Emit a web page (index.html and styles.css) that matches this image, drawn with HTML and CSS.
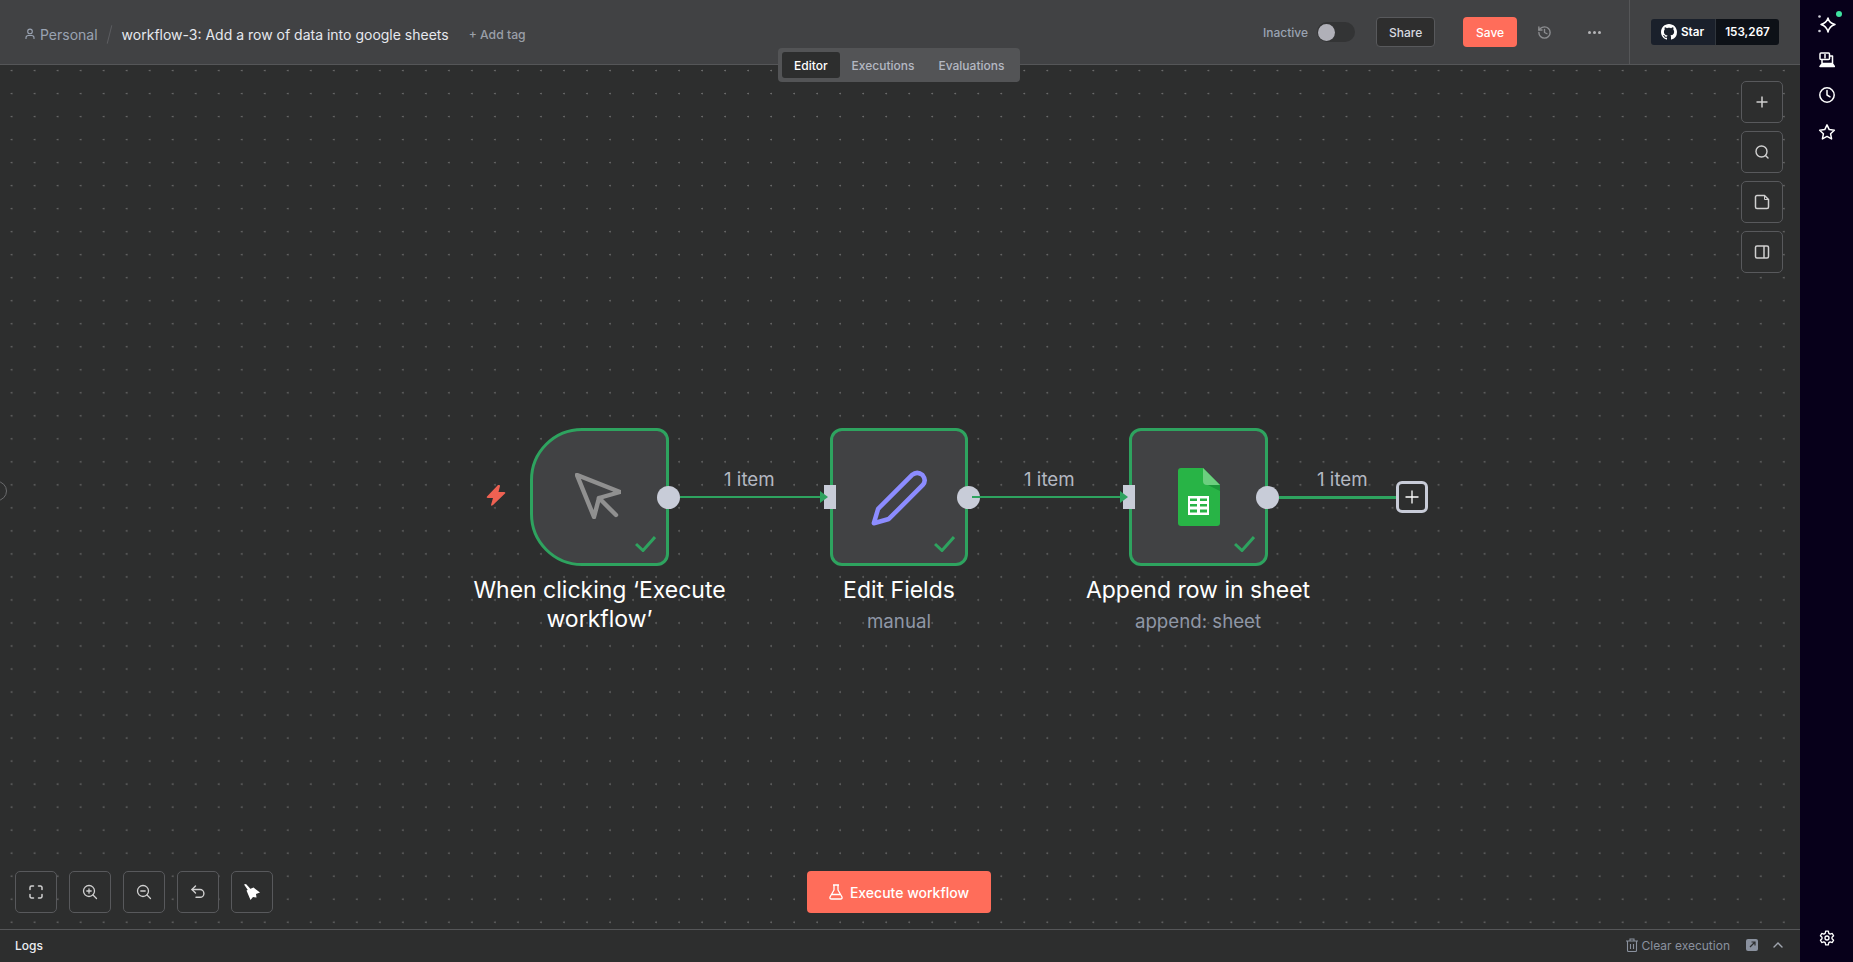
FILE: index.html
```html
<!DOCTYPE html>
<html lang="en">

<head>
    <meta charset="UTF-8" />
    <meta name="viewport" content="width=device-width, initial-scale=1.0" />
    <title>workflow-3: Add a row of data into google sheets</title>
    <link rel="stylesheet" href="styles.css">
</head>

<body>
    <div class="app">
        <div class="main">
            <header class="topbar">
                <div class="crumbs">
                    <svg class="person" width="12" height="12" viewBox="0 0 12 12" fill="none" stroke="currentColor" stroke-width="1.1">
                        <circle cx="6" cy="3.4" r="2.3" />
                        <path d="M2 11v-1.2A2.3 2.3 0 0 1 4.3 7.5h3.4A2.3 2.3 0 0 1 10 9.8V11" />
                    </svg>
                    <span class="project">Personal</span>
                    <span class="slash"></span>
                    <span class="wf-name">workflow-3: Add a row of data into google sheets</span>
                    <span class="add-tag">+ Add tag</span>
                </div>

                <div class="actions">
                    <span class="state">Inactive</span>
                    <span class="switch"><span class="knob"></span></span>
                    <button class="btn-share">Share</button>
                    <button class="btn-save">Save</button>
                    <svg class="history" width="15" height="15" viewBox="0 0 24 24" fill="none" stroke="currentColor" stroke-width="2.2" stroke-linecap="round" stroke-linejoin="round">
                        <path d="M3 12a9 9 0 1 0 9-9 9.75 9.75 0 0 0-6.74 2.74L3 8" />
                        <path d="M3 3v5h5" />
                        <path d="M12 7v5l4 2" />
                    </svg>
                    <span class="more"><i></i><i></i><i></i></span>
                </div>

                <div class="gh-box">
                    <div class="gh-star">
                        <svg width="16" height="16" viewBox="0 0 16 16" fill="#fff">
                            <path d="M8 0C3.58 0 0 3.58 0 8c0 3.54 2.29 6.53 5.47 7.59.4.07.55-.17.55-.38 0-.19-.01-.82-.01-1.49-2.01.37-2.53-.49-2.69-.94-.09-.23-.48-.94-.82-1.13-.28-.15-.68-.52-.01-.53.63-.01 1.08.58 1.23.82.72 1.21 1.87.87 2.33.66.07-.52.28-.87.51-1.07-1.78-.2-3.64-.89-3.64-3.95 0-.87.31-1.59.82-2.15-.08-.2-.36-1.02.08-2.12 0 0 .67-.21 2.2.82.64-.18 1.32-.27 2-.27s1.36.09 2 .27c1.53-1.04 2.2-.82 2.2-.82.44 1.1.16 1.92.08 2.12.51.56.82 1.27.82 2.15 0 3.07-1.87 3.75-3.65 3.95.29.25.54.73.54 1.48 0 1.07-.01 1.93-.01 2.2 0 .21.15.46.55.38A8.01 8.01 0 0 0 16 8c0-4.42-3.58-8-8-8z" />
                        </svg>
                        <span>Star</span>
                    </div>
                    <div class="gh-count">153,267</div>
                </div>

                <nav class="tabs">
                    <span class="tab active">Editor</span>
                    <span class="tab">Executions</span>
                    <span class="tab">Evaluations</span>
                </nav>
            </header>

            <section class="canvas">
                <!-- node cut off by the left edge of the canvas -->
                <i class="stub"></i>

                <!-- trigger bolt -->
                <svg class="bolt" width="20" height="21" viewBox="0 0 20 21" fill="#ee6152">
                    <path d="M12 0 L1 11.5 Q0 13 2 13 L7 13 L5 20 Q5 21.5 7 20 L19 8.5 Q20 7 18 7 L12.5 7 L14 1 Q14 -.5 12 0z" />
                </svg>

                <!-- edges -->
                <div class="edge" style="left: 680px; width: 146px"><span class="edge-label">1 item</span><i class="arrow"></i></div>
                <div class="edge" style="left: 972px; width: 154px"><span class="edge-label label-b">1 item</span><i class="arrow"></i></div>
                <div class="edge edge-end" style="left: 1279px; width: 117px"><span class="edge-label label-c">1 item</span></div>

                <!-- nodes -->
                <div class="node trigger wide" style="left: 530px">
                    <svg class="node-icon cursor-icon" width="46" height="46" viewBox="0 0 46 46" fill="none" stroke="#909090" stroke-width="4.4" stroke-linecap="round" stroke-linejoin="round">
                        <path d="M2 2 L45 19 L24 25 L19 44 Z" />
                        <path d="M24 25 L41 42" />
                    </svg>
                    <svg class="check" width="21" height="16" viewBox="0 0 21 16" fill="none" stroke="#2ea35f" stroke-width="3"><path d="M1 8 L8 14.5 L20 1" /></svg>
                    <i class="out"></i>
                </div>

                <div class="node" style="left: 830px">
                    <svg class="node-icon" width="60" height="60" viewBox="11 8 56 56" fill="none" stroke="#8c8cff" stroke-width="4.2" stroke-linejoin="round">
                        <path d="M15.5 60.5 L19.5 47 L51 15.5 Q56 11.5 61 15.5 Q65 20.5 61 25 L29.5 56.5 Z" />
                    </svg>
                    <svg class="check" width="21" height="16" viewBox="0 0 21 16" fill="none" stroke="#2ea35f" stroke-width="3"><path d="M1 8 L8 14.5 L20 1" /></svg>
                    <i class="in"></i>
                    <i class="out out-mid"></i>
                </div>

                <div class="node wide" style="left: 1129px">
                    <svg class="node-icon" width="42" height="58" viewBox="8 8 42 58">
                        <path d="M11 8 H33 L50 25 V63 a3 3 0 0 1-3 3 H11 a3 3 0 0 1-3-3 V11 a3 3 0 0 1 3-3z" fill="#28b446" />
                        <path d="M36 24 L50 31 V25 Z" fill="#1b973a" />
                        <path d="M33 8 L50 25 H37 a4 4 0 0 1-4-4z" fill="#6ccf7f" />
                        <path d="M18 36 H39 V55 H18z" fill="#fff" />
                        <path d="M20 38.500 H27 V41 H20z M30 38.500 H37 V41 H30z M20 44 H27 V46.500 H20z M30 44 H37 V46.500 H30z M20 49.500 H27 V52.500 H20z M30 49.500 H37 V52.500 H30z" fill="#28b446" />
                    </svg>
                    <svg class="check" width="21" height="16" viewBox="0 0 21 16" fill="none" stroke="#2ea35f" stroke-width="3"><path d="M1 8 L8 14.5 L20 1" /></svg>
                    <i class="in"></i>
                    <i class="out"></i>
                </div>

                <button class="add-node">
                    <svg width="16" height="16" viewBox="0 0 16 16" stroke="#fff" stroke-width="1.3"><path d="M8 1.500 V14.500 M1.500 8 H14.500" /></svg>
                </button>

                <!-- labels -->
                <div class="node-text" style="left: 449.5px">
                    <div class="node-title">When clicking ‘Execute workflow’</div>
                </div>
                <div class="node-text" style="left: 749px">
                    <div class="node-title">Edit Fields</div>
                    <div class="node-sub">manual</div>
                </div>
                <div class="node-text" style="left: 1048px">
                    <div class="node-title">Append row in sheet</div>
                    <div class="node-sub">append: sheet</div>
                </div>

                <div class="side-tools">
                    <button class="tool">
                        <svg width="16" height="16" viewBox="0 0 16 16" stroke="#d0d0d0" stroke-width="1.5"><path d="M8 2.500 V13.500 M2.500 8 H13.500" /></svg>
                    </button>
                    <button class="tool">
                        <svg width="16" height="16" viewBox="0 0 16 16" fill="none" stroke="#d0d0d0" stroke-width="1.4" stroke-linecap="round"><circle cx="7.500" cy="7.500" r="5.500" /><path d="M11.500 11.500 L14 14" /></svg>
                    </button>
                    <button class="tool">
                        <svg width="16" height="16" viewBox="0 0 16 16" fill="none" stroke="#d0d0d0" stroke-width="1.5" stroke-linejoin="round"><path d="M3 1.500 H10.500 L14.500 5.500 V13 a1.500 1.500 0 0 1-1.500 1.500 H3 a1.500 1.500 0 0 1-1.500-1.500 V3 a1.500 1.500 0 0 1 1.500-1.500z" /><path d="M10.500 2 V5.500 H14" stroke-width="1" /></svg>
                    </button>
                    <button class="tool">
                        <svg width="16" height="16" viewBox="0 0 16 16" fill="none" stroke="#d0d0d0" stroke-width="1.5"><rect x="1.500" y="2" width="13" height="12" rx="1.500" /><path d="M10 2 V14" /></svg>
                    </button>
                </div>

                <div class="bottom-tools">
                    <button class="tool">
                        <svg width="16" height="16" viewBox="0 0 16 16" fill="none" stroke="#d0d0d0" stroke-width="1.500" stroke-linecap="round"><path d="M2 5.500 V3.500 A1.500 1.500 0 0 1 3.500 2 H5.500 M10.500 2 H12.500 A1.500 1.500 0 0 1 14 3.500 V5.500 M14 10.500 V12.500 A1.500 1.500 0 0 1 12.500 14 H10.500 M5.500 14 H3.500 A1.500 1.500 0 0 1 2 12.500 V10.500" /></svg>
                    </button>
                    <button class="tool">
                        <svg width="16" height="16" viewBox="0 0 16 16" fill="none" stroke="#d0d0d0" stroke-width="1.300" stroke-linecap="round"><circle cx="7" cy="7" r="5.500" /><path d="M11 11 L14.500 14.500 M7 4.800 V9.200 M4.800 7 H9.200" /></svg>
                    </button>
                    <button class="tool">
                        <svg width="16" height="16" viewBox="0 0 16 16" fill="none" stroke="#d0d0d0" stroke-width="1.300" stroke-linecap="round"><circle cx="7" cy="7" r="5.500" /><path d="M11 11 L14.500 14.500 M4.800 7 H9.200" /></svg>
                    </button>
                    <button class="tool">
                        <svg width="16" height="16" viewBox="0 0 16 16" fill="none" stroke="#d0d0d0" stroke-width="1.400" stroke-linecap="round" stroke-linejoin="round"><path d="M5.500 2 L2 5.500 L5.500 9" /><path d="M2 5.500 H10 a3.800 3.800 0 0 1 0 7.800 H6" /></svg>
                    </button>
                    <button class="tool">
                        <svg width="16" height="16" viewBox="0 0 16 16" fill="#fff"><path d="M0 .5 L2 0 L7 5.500 L4.500 7z" /><path d="M2.500 6.500 L9.500 3.500 L16 8.500 L12 10 L12.500 13.500 L9 13 L6.500 16z" /></svg>
                    </button>
                </div>

                <button class="btn-run">
                    <svg width="14" height="16" viewBox="0 0 14 16" fill="none" stroke="#fff" stroke-width="1.300" stroke-linejoin="round"><path d="M4 1 H10 M5 1 V6 L1 13 Q.5 15 2.500 15 H11.500 Q13.500 15 13 13 L9 6 V1 M3 10.500 H11" /></svg>
                    <span>Execute workflow</span>
                </button>
            </section>

            <footer class="logs">
                <span class="logs-title">Logs</span>
                <div class="logs-right">
                    <svg width="12" height="14" viewBox="0 0 12 14" fill="none" stroke="#8a919e" stroke-width="1.100"><path d="M0 3 H12 M4 3 V1 H8 V3 M1.500 3 V12.500 a1 1 0 0 0 1 1 H9.500 a1 1 0 0 0 1-1 V3 M4.500 6 V11 M7.500 6 V11" /></svg>
                    <span class="clear">Clear execution</span>
                    <svg class="popout" width="12" height="12" viewBox="0 0 12 12"><rect width="12" height="12" rx="2" fill="#8a919e" /><path d="M4 8 L9 3 M5.500 3 H9 V6.500" fill="none" stroke="#2d2e2e" stroke-width="1.200" /></svg>
                    <svg class="chev" width="10" height="6" viewBox="0 0 10 6" fill="none" stroke="#a0a5ae" stroke-width="1.400" stroke-linecap="round"><path d="M1 5 L5 1 L9 5" /></svg>
                </div>
            </footer>
        </div>

        <aside class="sidebar">
            <div class="side-top">
                <span class="ai-icon">
                    <svg width="20" height="20" viewBox="0 0 20 20" fill="none" stroke="#fff" stroke-width="1.500" stroke-linejoin="round"><path d="M11 4 Q12 9 18 10.500 Q12.500 12 11 18 Q9.500 12 4 10.500 Q9.500 9 11 4z" /><circle cx="2.500" cy="2.500" r="1.300" fill="#cfcfd8" stroke="none" /><circle cx="2.500" cy="17" r="1.300" fill="#cfcfd8" stroke="none" /></svg>
                    <i class="ai-dot"></i>
                </span>
                <svg width="16" height="16" viewBox="0 0 16 16" fill="none" stroke="#fff" stroke-width="1.500" stroke-linejoin="round"><rect x="1" y="1" width="9.500" height="6.500" rx="1" /><path d="M6 2 V6.500 M10.500 4 H13.500 V12 M3 7.500 V11.500 H13.500" /><path d="M1 14.500 H15.500 L14 12.500 H2.500z" fill="#fff" /></svg>
                <svg width="18" height="18" viewBox="0 0 18 18" fill="none" stroke="#fff" stroke-width="1.500" stroke-linecap="round" stroke-linejoin="round"><circle cx="9" cy="9" r="7.200" /><path d="M9 4.500 V9 L12 10.800" /></svg>
                <svg width="18" height="18" viewBox="0 0 24 24" fill="none" stroke="#fff" stroke-width="2" stroke-linejoin="round"><path d="M12 2.500 L15 8.800 L21.800 9.700 L16.800 14.400 L18.100 21.200 L12 17.900 L5.900 21.200 L7.200 14.400 L2.200 9.700 L9 8.800 Z" /></svg>
            </div>
            <svg class="gear" width="16" height="16" viewBox="0 0 24 24" fill="none" stroke="#fff" stroke-width="2" stroke-linejoin="round"><path d="M10 1.800 H14 L14.700 5 L16.800 6.200 L19.900 5.200 L21.900 8.700 L19.500 10.800 V13.200 L21.900 15.300 L19.900 18.800 L16.800 17.800 L14.700 19 L14 22.200 H10 L9.300 19 L7.200 17.800 L4.100 18.800 L2.100 15.300 L4.500 13.200 V10.800 L2.100 8.700 L4.100 5.200 L7.200 6.200 L9.300 5 Z" /><circle cx="12" cy="12" r="3" /></svg>
        </aside>
    </div>
</body>

</html>
```

FILE: styles.css
```css
* {
    box-sizing: border-box;
}

body {
    margin: 0;
    font-family: Inter, "Noto Sans", sans-serif;
    background-color: #2d2e2e;
    color: #fff;
    overflow: hidden;
}

button {
    font-family: inherit;
    cursor: pointer;
}

.app {
    display: flex;
    height: 100vh;
}

.main {
    flex: 1;
    display: flex;
    flex-direction: column;
    min-width: 0;
}

/* top bar */
.topbar {
    position: relative;
    height: 65px;
    flex-shrink: 0;
    display: flex;
    align-items: center;
    background-color: #414244;
    border-bottom: 1px solid #555658;
    z-index: 5;
}

.crumbs {
    display: flex;
    align-items: center;
    padding-left: 24px;
    padding-top: 4px;
    flex: 1;
}

.person {
    color: #9aa3b2;
    margin-right: 4px;
}

.project {
    font-size: 14px;
    color: #9aa3b2;
}

.slash {
    width: 1px;
    height: 19px;
    margin: 0 11.5px;
    background-color: #5c5d60;
    transform: rotate(14deg);
}

.wf-name {
    font-size: 14px;
    color: #e6e8ee;
}

.add-tag {
    font-size: 12.2px;
    font-weight: 500;
    color: #9a9fa8;
    margin-left: 20px;
}

.actions {
    display: flex;
    align-items: center;
    height: 100%;
    width: 366px;
}

.state {
    font-size: 12px;
    font-weight: 500;
    color: #9aa3b2;
    margin-right: 9px;
}

.switch {
    display: flex;
    align-items: center;
    width: 38px;
    height: 20px;
    padding-left: 1px;
    border-radius: 10px;
    background-color: #333435;
    margin-right: 21px;
}

.knob {
    width: 17px;
    height: 17px;
    border-radius: 50%;
    background-color: #b0b0b8;
}

.btn-share {
    width: 59px;
    height: 30px;
    border: 1px solid #58595c;
    border-radius: 4px;
    background-color: #2e2e2e;
    color: #d8dae0;
    font-size: 12px;
    font-weight: 500;
    margin-right: 28px;
}

.btn-save {
    width: 54px;
    height: 30px;
    border: none;
    border-radius: 4px;
    background-color: #ff6d5a;
    color: #fff;
    font-size: 12px;
    font-weight: 500;
    margin-right: 20px;
}

.history {
    color: #8c8d90;
    margin-right: 36px;
}

.more {
    display: flex;
    gap: 2px;
}

.more i {
    width: 3px;
    height: 3px;
    border-radius: 50%;
    background-color: #b4b5b8;
}

.gh-box {
    width: 171px;
    height: 100%;
    flex-shrink: 0;
    display: flex;
    align-items: center;
    padding-left: 21px;
    border-left: 1px solid #555658;
    font-size: 11.7px;
    font-weight: 600;
}

.gh-star {
    display: flex;
    align-items: center;
    gap: 4px;
    width: 64px;
    height: 26px;
    padding-left: 10px;
    background-color: #1a202b;
    border-radius: 3px 0 0 3px;
}

.gh-count {
    width: 64px;
    height: 26px;
    line-height: 26px;
    text-align: center;
    background-color: #0d1117;
    border-left: 1px solid #30363d;
    border-radius: 0 3px 3px 0;
}

.tabs {
    position: absolute;
    left: 778px;
    top: 48px;
    width: 242px;
    height: 34px;
    display: flex;
    align-items: center;
    padding: 0 4px;
    gap: 0;
    background-color: #535456;
    border-radius: 4px;
}

.tab {
    height: 26px;
    line-height: 28px;
    padding: 0 12px;
    font-size: 12px;
    font-weight: 500;
    color: #b4b8c2;
}

.tab.active {
    background-color: #2d2e2e;
    color: #fff;
    border-radius: 3px;
}

/* canvas */
.canvas {
    position: relative;
    flex: 1;
    overflow: hidden;
    background-image: radial-gradient(circle at 11.7px 12px, #727272 0.6px, transparent 1.1px);
    background-size: 23.03px 23.03px;
    background-position: 0 -6.4px;
}

.stub {
    position: absolute;
    left: -13px;
    top: 416px;
    width: 20px;
    height: 20px;
    border: 1px solid #6a6b6d;
    border-radius: 50%;
}

.bolt {
    position: absolute;
    left: 486px;
    top: 420px;
}

.node {
    position: absolute;
    top: 363px;
    width: 138px;
    height: 138px;
    background-color: #414244;
    border: 3px solid #2ea35f;
    border-radius: 12px;
    display: flex;
    align-items: center;
    justify-content: center;
}

.node.wide {
    width: 139px;
}

.node.trigger {
    border-radius: 52px 12px 12px 52px;
}

.cursor-icon {
    margin: 0 4px 2px 0;
}

.check {
    position: absolute;
    right: 10px;
    bottom: 11px;
}

.node .out {
    position: absolute;
    right: -14px;
    top: 54.5px;
    width: 23px;
    height: 23px;
    border-radius: 50%;
    background-color: #c8ccd8;
}

.node .out-mid {
    right: -15px;
}

.node .in {
    position: absolute;
    left: -9px;
    top: 54px;
    width: 12px;
    height: 24px;
    background-color: #c8ccd8;
}

.edge {
    position: absolute;
    top: 431px;
    height: 2px;
    background-color: #2ea35f;
    z-index: 1;
}

.edge-end {
    height: 3px;
}

.arrow {
    position: absolute;
    right: -2px;
    top: -5px;
    border-left: 8px solid #2ea35f;
    border-top: 6px solid transparent;
    border-bottom: 6px solid transparent;
}

.edge-label {
    position: absolute;
    left: 44px;
    top: -28px;
    font-size: 18.7px;
    line-height: 24px;
    color: #b4b8c2;
    white-space: nowrap;
}

.label-b {
    left: 52px;
}

.label-c {
    left: 38px;
}

.add-node {
    position: absolute;
    left: 1396px;
    top: 416px;
    width: 32px;
    height: 32px;
    padding: 0;
    display: flex;
    align-items: center;
    justify-content: center;
    background-color: #2d2e2e;
    border: 3px solid #c8ccd8;
    border-radius: 6px;
    z-index: 2;
}

.node-text {
    position: absolute;
    top: 511px;
    width: 300px;
    text-align: center;
}

.node-title {
    width: 270px;
    margin: 0 auto;
    font-size: 23px;
    font-weight: 400;
    line-height: 29px;
    color: #fff;
}

.node-sub {
    margin-top: 5px;
    font-size: 18.7px;
    line-height: 24px;
    color: #8f97a6;
}

.tool {
    width: 42px;
    height: 42px;
    padding: 0;
    display: flex;
    align-items: center;
    justify-content: center;
    background-color: #2d2e2e;
    border: 1px solid #58595c;
    border-radius: 5px;
}

.side-tools {
    position: absolute;
    top: 16px;
    right: 17px;
    display: flex;
    flex-direction: column;
    gap: 8px;
}

.bottom-tools {
    position: absolute;
    left: 15px;
    bottom: 16px;
    display: flex;
    gap: 12px;
}

.btn-run {
    position: absolute;
    left: 807px;
    bottom: 16px;
    width: 184px;
    height: 42px;
    display: flex;
    align-items: center;
    justify-content: center;
    gap: 7px;
    background-color: #ff6d5a;
    border: none;
    border-radius: 4px;
    color: #fff;
    font-size: 14px;
    font-weight: 500;
}

/* logs */
.logs {
    height: 33px;
    flex-shrink: 0;
    display: flex;
    align-items: center;
    justify-content: space-between;
    padding: 0 17px 2px 15px;
    border-top: 1px solid #555658;
    background-color: #2d2e2e;
}

.logs-title {
    font-size: 12px;
    font-weight: 500;
    color: #eceef2;
}

.logs-right {
    display: flex;
    align-items: center;
}

.clear {
    margin-left: 4px;
    font-size: 12px;
    font-weight: 400;
    color: #8a919e;
}

.popout {
    margin-left: 16px;
}

.chev {
    margin-left: 15px;
}

/* right sidebar */
.sidebar {
    width: 53px;
    flex-shrink: 0;
    display: flex;
    flex-direction: column;
    align-items: center;
    justify-content: space-between;
    padding: 14px 0 16px;
    background-color: #07001a;
}

.side-top {
    display: flex;
    flex-direction: column;
    align-items: center;
    gap: 18.2px;
}

.ai-icon {
    position: relative;
    display: block;
    height: 20px;
}

.ai-dot {
    position: absolute;
    right: -5px;
    top: -3px;
    width: 6px;
    height: 6px;
    border-radius: 50%;
    background-color: #3fe2a0;
}
```
